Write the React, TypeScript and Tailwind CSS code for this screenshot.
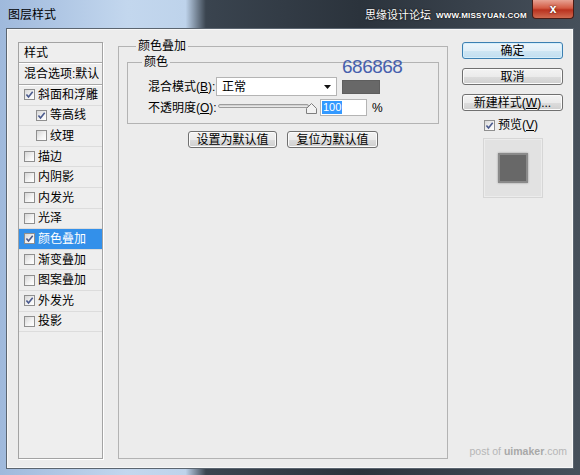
import React from 'react';

type Item = { label: string; checked: boolean; sub?: boolean; active?: boolean };

const items: Item[] = [
  { label: '斜面和浮雕', checked: true },
  { label: '等高线', checked: true, sub: true },
  { label: '纹理', checked: false, sub: true },
  { label: '描边', checked: false },
  { label: '内阴影', checked: false },
  { label: '内发光', checked: false },
  { label: '光泽', checked: false },
  { label: '颜色叠加', checked: true, active: true },
  { label: '渐变叠加', checked: false },
  { label: '图案叠加', checked: false },
  { label: '外发光', checked: true },
  { label: '投影', checked: false },
];

function CheckBox({ checked }: { checked: boolean }) {
  return (
    <span className="flex h-[11px] w-[11px] shrink-0 items-center justify-center border border-[#8f8f8f] bg-[linear-gradient(135deg,#d6d6d6,#f4f4f4_60%,#ffffff)]">
      {checked && (
        <svg width="9" height="9" viewBox="0 0 9 9">
          <path d="M1.4 4.5 3.5 6.9 7.7 1.7" fill="none" stroke="#4b5b8e" strokeWidth="1.6" />
        </svg>
      )}
    </span>
  );
}

function Button({ children, primary, className = '' }: { children: React.ReactNode; primary?: boolean; className?: string }) {
  const look = primary
    ? 'border-[#3c7fb1] bg-[linear-gradient(#eef6fb_0%,#e1eff8_50%,#cfe6f3_51%,#c2def0_100%)] shadow-[inset_0_0_0_1px_#d4eefb]'
    : 'border-[#707070] bg-[linear-gradient(#f3f3f3_0%,#ebebeb_50%,#dddddd_51%,#cfcfcf_100%)] shadow-[inset_0_0_0_1px_#fbfbfb]';
  return (
    <div className={`flex h-[17px] items-center justify-center whitespace-nowrap rounded-[3px] border text-[12px] leading-[14px] ${look} ${className}`}>
      {children}
    </div>
  );
}

export default function App() {
  return (
    <div className="flex h-[475px] w-[580px] flex-col overflow-hidden bg-[linear-gradient(90deg,#9fb9dc_0%,#c3d7ee_22%,#bed3eb_32%,#3a444f_35.5%,#2b333c_62%,#46505b_100%)] font-['Liberation_Sans','Noto_Sans_CJK_SC',sans-serif] text-black">
      {/* title bar */}
      <div className="relative flex h-[28px] shrink-0 items-start">
        <span className="mt-[8px] pl-[8px] text-[12px] leading-[14px]">图层样式</span>
        <div className="ml-auto mr-[6px] flex h-[19px] w-[42px] items-center justify-center rounded-b-[4px] border border-t-0 border-[#4a1c15] bg-[linear-gradient(#e7a293,#d35a43_45%,#b9321f_55%,#d06a50)]">
          <span className="text-[12px] font-bold leading-none text-white [text-shadow:0_0_2px_#3a0f08]">x</span>
        </div>
        <div className="absolute left-[365px] top-[8px] flex items-end gap-[5px] text-white [text-shadow:0_0_2px_#222,0_0_1px_#000]">
          <span className="text-[11px] leading-[14px]">思缘设计论坛</span>
          <span className="mb-[1px] text-[8px] font-bold leading-[10px] tracking-[0.2px]">WWW.MISSYUAN.COM</span>
        </div>
      </div>

      {/* body */}
      <div className="relative mx-[6px] mb-[6px] flex flex-1 items-start border border-[#5b6570] bg-[#ececec] pl-[11px] pr-[10px] pt-[13px] shadow-[inset_0_0_0_1px_#f7f7f7]">
        {/* styles list */}
        <div className="flex h-[417px] w-[85px] shrink-0 flex-col border border-[#a3a3a3] bg-[#eeeeee] shadow-[1px_1px_0_#ffffff] text-[12px] leading-[14px]">
          <div className="flex h-[20px] shrink-0 items-center border-b border-[#a8a8a8] pl-[5px] shadow-[0_1px_0_#ffffff]">样式</div>
          <div className="flex h-[22px] shrink-0 items-center whitespace-nowrap border-b border-[#a8a8a8] pl-[5px] shadow-[0_1px_0_#ffffff]">混合选项:默认</div>
          {items.map((it) => (
            <div
              key={it.label}
              className={`flex h-[20.6px] shrink-0 items-center gap-[3px] border-b border-[#dcdcdc] ${it.sub ? 'pl-[17px]' : 'pl-[5px]'} ${it.active ? 'bg-[#3390ea] text-white' : ''}`}
            >
              <CheckBox checked={it.checked} />
              <span>{it.label}</span>
            </div>
          ))}
        </div>

        {/* settings */}
        <fieldset className="ml-[15px] flex h-[417px] w-[330px] shrink-0 flex-col border border-[#b3b3b3] text-[12px] leading-[14px]">
          <legend className="ml-[17px] px-[2px] leading-[8px]">颜色叠加</legend>
          <fieldset className="mx-[8px] mt-[8px] flex flex-col border border-[#b3b3b3] pb-[7px] pl-[20px] pt-[11px]">
            <legend className="ml-[-6px] px-[2px] leading-[8px]">颜色</legend>
            <div className="flex h-[19px] items-center">
              <span className="w-[68px] shrink-0 whitespace-nowrap">
                混合模式(<u>B</u>):
              </span>
              <div className="flex h-[19px] w-[121px] shrink-0 items-center border border-[#b4b4b4] bg-white pl-[5px] pr-[5px]">
                <span>正常</span>
                <svg className="ml-auto" width="7" height="4" viewBox="0 0 7 4">
                  <path d="M0 0h7L3.5 4z" fill="#111" />
                </svg>
              </div>
              <div className="ml-[5px] h-[14px] w-[38px] shrink-0 border border-[#5e5e5e] bg-[#686868]" />
            </div>
            <div className="mt-[3px] flex h-[17px] items-center">
              <span className="w-[68px] shrink-0 whitespace-nowrap">
                不透明度(<u>O</u>):
              </span>
              <div className="relative h-[17px] w-[104px] shrink-0">
                <div className="absolute left-[2px] top-[5px] h-[4px] w-[91px] rounded-full border border-[#9c9c9c] bg-[linear-gradient(#c9c9c9,#f2f2f2)]" />
                <svg className="absolute left-[90px] top-[4px]" width="11" height="11" viewBox="0 0 11 11">
                  <path d="M5.5 0.5 10.5 5.5V10.5H0.5V5.5Z" fill="#f2f2f2" stroke="#7e7e7e" />
                </svg>
              </div>
              <div className="flex h-[17px] w-[47px] shrink-0 items-center border border-[#b4b4b4] bg-white pl-[1px]">
                <span className="bg-[#3399ff] px-[1px] text-[11px] leading-[13px] text-white">100</span>
              </div>
              <span className="ml-[5px]">%</span>
            </div>
          </fieldset>
          <div className="mt-[7px] flex justify-center gap-[10px]">
            <Button className="w-[89px]">设置为默认值</Button>
            <Button className="w-[91px]">复位为默认值</Button>
          </div>
        </fieldset>

        {/* buttons */}
        <div className="ml-[14px] flex w-[101px] shrink-0 flex-col text-[12px] leading-[14px]">
          <Button primary>确定</Button>
          <Button className="mt-[9px]">取消</Button>
          <Button className="mt-[9px]">
            新建样式(<u>W</u>)...
          </Button>
          <div className="mt-[7px] flex h-[14px] items-center gap-[3px] pl-[22px]">
            <CheckBox checked />
            <span>
              预览(<u>V</u>)
            </span>
          </div>
          <div className="ml-[21px] mt-[6px] flex h-[60px] w-[60px] items-center justify-center border border-[#d6d6d6] bg-[#e2e2e2] shadow-[inset_0_0_0_1px_#ececec]">
            <div className="h-[30px] w-[30px] border-2 border-[#8a8a8a] bg-[#686868] shadow-[0_0_2px_#9a9a9a]" />
          </div>
        </div>

        <div className="absolute left-[335px] top-[28px] text-[19px] leading-[19px] tracking-[-0.5px] text-[#4660ad]">686868</div>
        <div className="absolute bottom-[11px] right-[6px] text-[10.5px] leading-[12px] text-[#b6b6b6]">
          post of <span className="font-bold text-[#a8a8a8]">uimaker</span>.com
        </div>
      </div>
    </div>
  );
}
